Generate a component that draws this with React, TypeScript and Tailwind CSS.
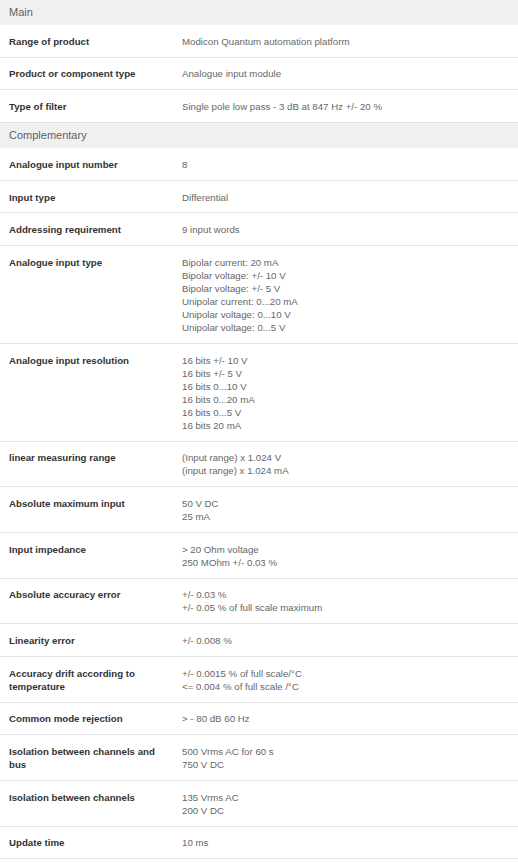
const main = [
  { label: "Range of product", value: ["Modicon Quantum automation platform"] },
  { label: "Product or component type", value: ["Analogue input module"] },
  { label: "Type of filter", value: ["Single pole low pass - 3 dB at 847 Hz +/- 20 %"] },
];

const complementary = [
  { label: "Analogue input number", value: ["8"] },
  { label: "Input type", value: ["Differential"] },
  { label: "Addressing requirement", value: ["9 input words"] },
  {
    label: "Analogue input type",
    value: [
      "Bipolar current: 20 mA",
      "Bipolar voltage: +/- 10 V",
      "Bipolar voltage: +/- 5 V",
      "Unipolar current: 0...20 mA",
      "Unipolar voltage: 0...10 V",
      "Unipolar voltage: 0...5 V",
    ],
  },
  {
    label: "Analogue input resolution",
    value: [
      "16 bits +/- 10 V",
      "16 bits +/- 5 V",
      "16 bits 0...10 V",
      "16 bits 0...20 mA",
      "16 bits 0...5 V",
      "16 bits 20 mA",
    ],
  },
  { label: "linear measuring range", value: ["(Input range) x 1.024 V", "(input range) x 1.024 mA"] },
  { label: "Absolute maximum input", value: ["50 V DC", "25 mA"] },
  { label: "Input impedance", value: ["> 20 Ohm voltage", "250 MOhm +/- 0.03 %"] },
  { label: "Absolute accuracy error", value: ["+/- 0.03 %", "+/- 0.05 % of full scale maximum"] },
  { label: "Linearity error", value: ["+/- 0.008 %"] },
  {
    label: "Accuracy drift according to temperature",
    value: ["+/- 0.0015 % of full scale/°C", "<= 0.004 % of full scale /°C"],
  },
  { label: "Common mode rejection", value: ["> - 80 dB 60 Hz"] },
  { label: "Isolation between channels and bus", value: ["500 Vrms AC for 60 s", "750 V DC"] },
  { label: "Isolation between channels", value: ["135 Vrms AC", "200 V DC"] },
  { label: "Update time", value: ["10 ms"] },
];

type Row = { label: string; value: string[] };

const SectionHeader = ({ title }: { title: string }) => (
  <div className="h-[25px] bg-[#f0f0f0] pl-[9px] flex items-center text-[11px] leading-none text-[#5f6166]">
    {title}
  </div>
);

const SpecRow = ({ row }: { row: Row }) => (
  <div className="flex border-b border-[#e3e3e3] pt-[9.8px] pb-[8.9px] text-[9.7px] leading-[13px]">
    <div className="w-[173px] shrink-0 pl-[9px] pr-[10px] font-bold text-[#333333]">{row.label}</div>
    <div className="flex-1 pl-[9px] text-[#676767]">
      {row.value.map((v, i) => (
        <div key={i}>{v}</div>
      ))}
    </div>
  </div>
);

export default function App() {
  return (
    <div className="w-[518px] bg-white font-['Liberation_Sans',Arial,sans-serif]">
      <div className="shadow-[inset_0_2px_2px_rgba(0,0,0,0.04)]">
        <SectionHeader title="Main" />
      </div>
      {main.map((r) => (
        <SpecRow key={r.label} row={r} />
      ))}
      <SectionHeader title="Complementary" />
      {complementary.map((r) => (
        <SpecRow key={r.label} row={r} />
      ))}
    </div>
  );
}
